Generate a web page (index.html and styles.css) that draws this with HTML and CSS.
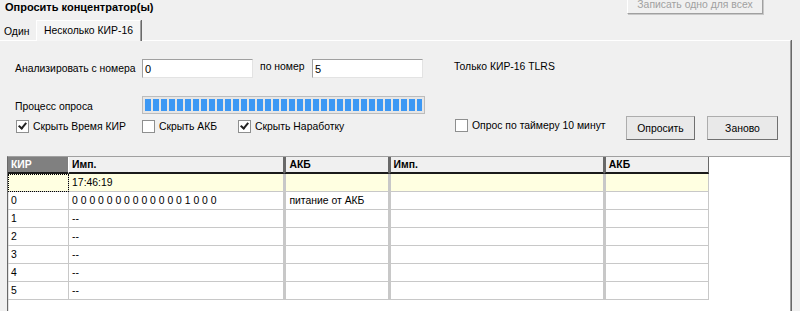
FILE: index.html
```html
<!DOCTYPE html>
<html lang="ru">
<head>
    <meta charset="UTF-8">
    <title>Опросить концентратор(ы)</title>
    <link rel="stylesheet" href="styles.css">
</head>
<body>
    <div class="header">
        <h1>Опросить концентратор(ы)</h1>
        <button class="btn btn-disabled" disabled>Записать одно для всех</button>
    </div>
    <div class="tabs">
        <div class="tab">Один</div>
        <div class="tab tab-active">Несколько КИР-16</div>
    </div>
    <div class="panel">
        <div class="row row-range">
            <span class="label">Анализировать с номера</span>
            <input class="field" type="text" value="0">
            <span class="label-to">по номер</span>
            <input class="field" type="text" value="5">
            <span class="note">Только КИР-16 TLRS</span>
        </div>
        <div class="row row-progress">
            <span class="label">Процесс опроса</span>
            <div class="progress"><div class="progress-fill"></div></div>
        </div>
        <div class="row row-options">
            <label class="check check-time"><span class="cb checked"></span>Скрыть Время КИР</label>
            <label class="check check-akb"><span class="cb"></span>Скрыть АКБ</label>
            <label class="check check-work"><span class="cb checked"></span>Скрыть Наработку</label>
            <label class="check check-timer"><span class="cb"></span>Опрос по таймеру 10 минут</label>
            <button class="btn btn-poll">Опросить</button>
            <button class="btn btn-reset">Заново</button>
        </div>
        <div class="grid">
            <table>
                <thead>
                    <tr>
                        <th class="c-kir fixed">КИР</th>
                        <th class="c-imp">Имп.</th>
                        <th class="c-akb dbl">АКБ</th>
                        <th class="c-imp dbl">Имп.</th>
                        <th class="c-akb2 dbl">АКБ</th>
                    </tr>
                </thead>
                <tbody>
                    <tr class="current">
                        <td class="focus"></td>
                        <td>17:46:19</td>
                        <td class="dbl"></td>
                        <td class="dbl"></td>
                        <td class="dbl"></td>
                    </tr>
                    <tr>
                        <td>0</td>
                        <td>0 0 0 0 0 0 0 0 0 0 0 0 0 1 0 0 0</td>
                        <td class="dbl">питание от АКБ</td>
                        <td class="dbl"></td>
                        <td class="dbl"></td>
                    </tr>
                    <tr><td>1</td><td>--</td><td class="dbl"></td><td class="dbl"></td><td class="dbl"></td></tr>
                    <tr><td>2</td><td>--</td><td class="dbl"></td><td class="dbl"></td><td class="dbl"></td></tr>
                    <tr><td>3</td><td>--</td><td class="dbl"></td><td class="dbl"></td><td class="dbl"></td></tr>
                    <tr><td>4</td><td>--</td><td class="dbl"></td><td class="dbl"></td><td class="dbl"></td></tr>
                    <tr><td>5</td><td>--</td><td class="dbl"></td><td class="dbl"></td><td class="dbl"></td></tr>
                </tbody>
            </table>
        </div>
    </div>
</body>
</html>
```

FILE: styles.css
```css
body {
    margin: 0;
    background-color: #f0f0f0;
    font-family: "Liberation Sans", Arial, sans-serif;
    font-size: 10.4px;
    color: #000;
    height: 311px;
    overflow: hidden;
    white-space: nowrap;
}
.header {
    display: flex;
    justify-content: space-between;
    align-items: flex-start;
    height: 20px;
}
h1 {
    margin: 0;
    padding: 1px 0 0 5px;
    font-size: 11px;
    line-height: 12px;
    font-weight: bold;
}
.btn {
    font-family: inherit;
    font-size: 10.4px;
    background: #e9e9e9;
    border: 1px solid #adadad;
    border-right-color: #707070;
    border-bottom-color: #707070;
    padding: 0;
    color: #000;
}
.btn-disabled {
    width: 136px;
    height: 20px;
    margin: -6px 37px 0 0;
    padding-top: 2px;
    color: #a0a0a0;
    background: #f0f0f0;
    border-color: #fff #a0a0a0 #a0a0a0 #fff;
    box-shadow: 1px 1px 0 #c8c8c8;
    line-height: 16px;
}
.tabs {
    display: flex;
    align-items: flex-end;
    height: 20px;
}
.tab {
    height: 17px;
    line-height: 17px;
    padding: 0 5px 0 4px;
    width: 27px;
}
.tab-active {
    position: relative;
    height: 20px;
    line-height: 20px;
    width: auto;
    padding: 0 7px 0 7px;
    margin-bottom: -1px;
    background: #f5f5f5;
    border-top: 1px solid #fff;
    border-left: 1px solid #fff;
    border-right: 1px solid #a0a0a0;
    box-shadow: 1px 0 0 #696969;
}
.panel {
    width: 790px;
    height: 270px;
    border-top: 1px solid #fff;
    border-right: 1px solid #a0a0a0;
    box-shadow: 1px 0 0 #696969;
}
.row {
    display: flex;
    align-items: center;
}
.label {
    width: 127px;
    padding-left: 15px;
}
.row-range {
    margin-top: 18px;
    height: 19px;
}
.field {
    box-sizing: border-box;
    width: 111px;
    height: 19px;
    margin: 0;
    padding: 1px 2px;
    font-family: inherit;
    font-size: 11px;
    background: #fff;
    border: 1px solid #a0a0a0;
    border-right-color: #e3e3e3;
    border-bottom-color: #e3e3e3;
    outline: none;
}
.label-to {
    width: 52px;
    padding-left: 7px;
    margin-top: -4px;
}
.note {
    margin-left: 31px;
    margin-top: -4px;
}
.row-progress {
    margin-top: 18px;
    height: 18px;
}
.row-progress .label {
    margin-top: 2px;
}
.progress {
    box-sizing: border-box;
    width: 283px;
    height: 18px;
    padding: 2px;
    background: #e6e6e6;
    border: 1px solid #bcbcbc;
}
.progress-fill {
    height: 100%;
    background: repeating-linear-gradient(to right, #3c98f4 0 6px, transparent 6px 8px);
}
.row-options {
    height: 24px;
    margin-top: 4px;
    align-items: flex-start;
}
.check {
    display: flex;
    align-items: center;
    gap: 4px;
    margin-top: 2px;
    line-height: 13px;
}
.check-time {
    margin-left: 16px;
    width: 126px;
}
.check-akb {
    width: 96px;
}
.check-work {
    width: 217px;
}
.check-timer {
    width: 171px;
    margin-top: 1px;
}
.cb {
    box-sizing: border-box;
    width: 13px;
    height: 13px;
    background: #fff;
    border: 1px solid #8e8f8f;
    position: relative;
}
.cb.checked::after {
    content: "";
    position: absolute;
    left: 3px;
    top: 0;
    width: 3px;
    height: 6px;
    border: solid #222;
    border-width: 0 2px 2px 0;
    transform: rotate(40deg);
}
.btn-poll {
    width: 69px;
    height: 24px;
    margin-top: -2px;
}
.btn-reset {
    width: 71px;
    height: 24px;
    margin-top: -2px;
    margin-left: 12px;
}
.grid {
    margin: 14px 0 0 7px;
    width: 782px;
    height: 160px;
    background: #fff;
    border-top: 1px solid #a0a0a0;
    border-left: 1px solid #696969;
    box-shadow: inset 1px 0 0 #e3e3e3;
}
table {
    border-collapse: separate;
    border-spacing: 0;
    table-layout: fixed;
    width: 701px;
}
th, td {
    padding: 0 0 0 3px;
    text-align: left;
    overflow: hidden;
    box-sizing: border-box;
}
th {
    height: 17px;
    font-weight: bold;
    background: #f0f0f0;
    border-right: 1px solid #696969;
    border-bottom: 2px solid #1a1a1a;
}
th.fixed {
    background: #808080;
    color: #fff;
    border-right: 1px solid #fff;
}
th.dbl {
    border-left: 2px solid #696969;
}
.c-kir { width: 61px; }
.c-imp { width: 215px; }
.c-akb { width: 104px; }
.c-akb2 { width: 105px; }
td {
    height: 18px;
    color: #000;
    border-right: 1px solid #c8c8c8;
    border-bottom: 1px solid #c8c8c8;
}
td.dbl {
    border-left: 2px solid #c8c8c8;
}
tr.current td {
    background: #ffffe1;
}
td.focus {
    outline: 1px dotted #000;
    outline-offset: -1px;
}
```
